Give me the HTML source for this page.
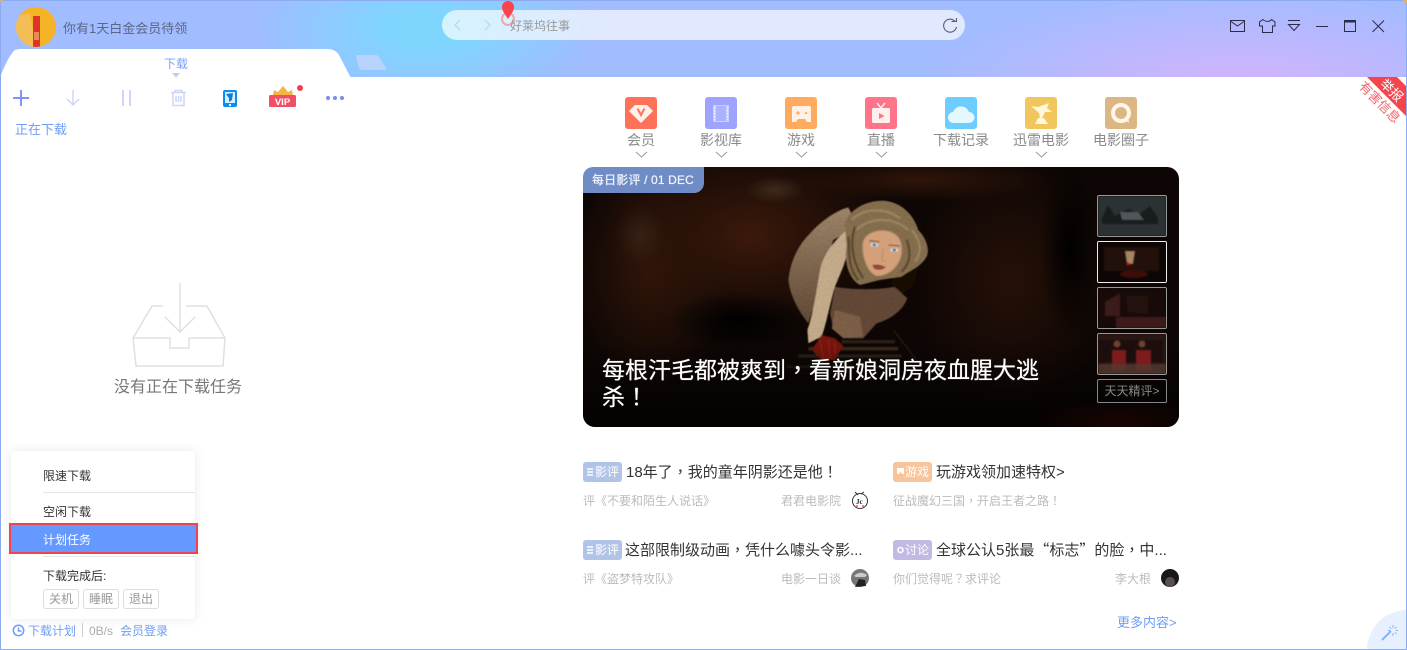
<!DOCTYPE html>
<html><head><meta charset="utf-8"><style>
html,body{margin:0;padding:0;background:#fff;width:1407px;height:650px;overflow:hidden}
#app{position:relative;width:1407px;height:650px;overflow:hidden;background:#fff;font-family:"Liberation Sans","Noto Sans CJK SC",sans-serif;font-size:12px}
.t{position:absolute;white-space:nowrap;line-height:18px;transform:translateY(-8px)}
.abs{position:absolute}
.p{font-family:"Noto Sans CJK TC",sans-serif;line-height:0}
.q{font-family:"Noto Sans CJK SC",sans-serif;line-height:0}
#title{position:absolute;left:0;top:0;width:1407px;height:77px;background:radial-gradient(ellipse 330px 110px at 1240px 95px,#d7b3ff 0%,rgba(215,179,255,0) 100%),radial-gradient(ellipse 175px 80px at 425px 30px,#7ed6ff 0%,#7ed6ff 20%,rgba(126,214,255,0) 100%),#a1bcff}
.ic{position:absolute;width:32px;height:32px;top:97px;border-radius:3px}
.nl{position:absolute;top:139px;color:#8a8a8a;font-size:14px;line-height:18px;transform:translate(-50%,-8px);white-space:nowrap}
.tag{position:absolute;width:39px;height:20px;border-radius:3px;color:#fff;font-size:12px;line-height:20px;text-indent:12px;overflow:hidden}
.ttl{font-size:15px;color:#333}
.sub{color:#bbb;font-size:12px}
.m{color:#333;font-size:12px}
.btn{position:absolute;top:589px;width:34px;height:18px;border:1px solid #ddd;border-radius:3px;color:#999;text-align:center;line-height:19px;font-size:12px}
.th{position:absolute;left:1097px;width:68px;height:40px;border:1px solid #999;border-radius:2px;overflow:hidden}
.th svg{filter:blur(.7px);display:block}
</style></head><body><div id="app">
<div id="title"></div>

<!-- avatar -->
<svg class="abs" style="left:16px;top:7px" width="40" height="40" viewBox="0 0 40 40"><defs><clipPath id="av"><circle cx="20" cy="20" r="20"/></clipPath></defs><g clip-path="url(#av)"><rect width="40" height="40" fill="#f4b426"/><path d="M0 10L14 6 L20 40H0Z" fill="#f5bd55"/><rect x="17" y="9" width="7" height="31" fill="#de3326"/><rect x="18" y="25" width="5" height="8" fill="#e98a55"/></g></svg>
<div class="t" style="left:63px;top:28px;font-size:13px;color:#5b6687">你有1天白金会员待领</div>

<!-- tabs -->
<svg class="abs" style="left:0;top:45px" width="400" height="34" viewBox="0 0 400 34"><path d="M0 34 L0 32 C5 20 10 9 15 5 Q17 4 22 4 L328 4 Q335 4 339 10 L351 33 L351 34Z" fill="#fff"/><path d="M356 11.500 Q355 10 358 10 L376 10 Q378 10 379 12 L386 23 Q387 25 384 25 L362 25 Q360 25 359 23Z" fill="#b9d3ff"/></svg>
<div class="t" style="left:164px;top:63px;font-size:12px;color:#7d9dfb">下载</div>
<svg class="abs" style="left:172px;top:73px" width="8" height="5"><path d="M0 0H8L4 4.500Z" fill="#bcc9fb"/></svg>

<!-- toolbar -->
<svg class="abs" style="left:0;top:80px" width="360" height="36" viewBox="0 80 360 36" fill="none">
<path d="M21 90V106M13 98H29" stroke="#8093ff" stroke-width="2"/>
<path d="M73 90V105M67 99L73 105L79 99" stroke="#cdd5fc" stroke-width="1.500"/>
<path d="M123 90V106M130 90V106" stroke="#cdd5fc" stroke-width="2"/>
<path d="M171 92.500H186M175 92V90.500H182V92M173 93V105.500H184V93M176 96V102M178.500 96V102M181 96V102" stroke="#cdd5fc" stroke-width="1.500"/>
<rect x="223" y="90" width="14" height="17" rx="2" fill="#0b8ef0"/><rect x="225" y="92" width="10" height="11" fill="#d5effc"/><path d="M226 94L233 93L232 100L229 102L229 98Z" fill="#0b7fd8"/><rect x="229" y="104" width="2" height="2" fill="#fff"/>
<path d="M273 95L274 90L278 92L283 86L288 92L292 90L293 95Z" fill="#f7b343"/>
<rect x="269" y="95" width="27" height="12" rx="1.500" fill="#f14f66"/>
<text x="282.500" y="105" text-anchor="middle" font-family="Liberation Sans" font-weight="bold" font-size="9.500" fill="#fff">VIP</text>
<circle cx="300" cy="88" r="3" fill="#f2404a"/>
<circle cx="328" cy="98" r="2" fill="#7b8bef"/><circle cx="335" cy="98" r="2" fill="#7b8bef"/><circle cx="342" cy="98" r="2" fill="#7b8bef"/>
</svg>
<div class="t" style="left:15px;top:129px;font-size:13px;color:#6f9df7">正在下载</div>

<!-- search -->
<div class="abs" style="left:442px;top:10px;width:523px;height:30px;border-radius:15px;background:rgba(255,255,255,.68)"></div>
<svg class="abs" style="left:440px;top:0" width="530" height="44" viewBox="440 0 530 44" fill="none">
<path d="M460 20L455 25L460 30" stroke="#bfd0dc"/><path d="M485 20L490 25L485 30" stroke="#bfd0dc"/>
<circle cx="508" cy="19" r="6" stroke="#f2a5a9" stroke-width="2"/>
<path d="M508 19 C505 14 502 11 502 7 A6 6 0 0 1 514 7 C514 11 511 14 508 19Z" fill="#f8444b"/>
<path d="M955.500 22A6.500 6.500 0 1 0 956.500 27" stroke="#555f7a" stroke-width="1.100"/><path d="M951.500 21.500H956.500V18" stroke="#555f7a" stroke-width="1.100"/>
</svg>
<div class="t" style="left:510px;top:24.500px;font-size:12px;color:#999">好莱坞往事</div>

<!-- window controls -->
<svg class="abs" style="left:1225px;top:14px" width="165" height="24" viewBox="1225 14 165 24" fill="none" stroke="#2c2c4a" stroke-width="1">
<rect x="1230.500" y="20.500" width="14" height="11"/><path d="M1231 21.500L1237.500 26L1244 21.500"/>
<path d="M1263 19.500L1259.500 22V26H1262.500V32.500H1272.500V26H1275V22L1271.500 19.500C1270 22 1265 22 1263 19.500Z"/>
<path d="M1288 20.500H1300M1288.500 24.500H1299.500L1294 30.500Z"/>
<path d="M1316 26.500H1328"/>
<rect x="1344.500" y="20.500" width="11" height="11"/><path d="M1344 21.500H1356" stroke-width="2"/>
<path d="M1372.500 20.500L1384 32M1384 20.500L1372.500 32"/>
</svg>

<!-- ribbon -->
<svg class="abs" style="left:1340px;top:77px" width="67" height="60" viewBox="1340 77 67 60"><path d="M1367 77H1397L1407 87V117Z" fill="#f4454c"/>
<text x="1392" y="95" text-anchor="middle" transform="rotate(45 1392 90)" font-size="13" fill="#fff" font-family="Noto Sans CJK SC">举报</text>
<text x="1380" y="107" text-anchor="middle" transform="rotate(45 1380 102)" font-size="13" fill="#f4666c" font-family="Noto Sans CJK SC">有害信息</text></svg>

<!-- nav icons -->
<div class="ic" style="left:625px;background:#fe7259"></div>
<svg class="abs" style="left:625px;top:97px" width="32" height="32" viewBox="0 0 32 32"><path d="M10 8H22L28 14L16 26L4 14Z" fill="#fff0ea"/><path d="M12.500 11.500L16 18L19.500 11.500" stroke="#fe7259" stroke-width="2" fill="none"/></svg>
<div class="ic" style="left:705px;background:#9da3ff"></div>
<svg class="abs" style="left:705px;top:97px" width="32" height="32" viewBox="0 0 32 32"><rect x="8" y="8" width="16" height="17" fill="#c9cdff"/><rect x="11" y="9" width="10" height="15" fill="#adb2ff"/><path d="M9.500 10V23M22.500 10V23" stroke="#eef" stroke-width="1.500" stroke-dasharray="1.500 1.500"/></svg>
<div class="ic" style="left:785px;background:#ffab5f"></div>
<svg class="abs" style="left:785px;top:97px" width="32" height="32" viewBox="0 0 32 32"><path d="M9 9H24Q26 9 26 11V25H22L20 22H13L11 25H7V11Q7 9 9 9Z" fill="#fff1e3"/><path d="M11 16H15M13 14V18" stroke="#ffab5f" stroke-width="1.300"/><circle cx="21" cy="16" r="1.200" fill="#ffab5f"/></svg>
<div class="ic" style="left:865px;background:#ff7488"></div>
<svg class="abs" style="left:865px;top:97px" width="32" height="32" viewBox="0 0 32 32"><rect x="7" y="11" width="18" height="15" rx="1.500" fill="#fff0ee"/><path d="M12 6L16 11L20 6" stroke="#fff0ee" stroke-width="1.500" fill="none"/><path d="M14 16L19.500 19L14 22Z" fill="#ff7488"/></svg>
<div class="ic" style="left:945px;background:#6dcdff"></div>
<svg class="abs" style="left:945px;top:97px" width="32" height="32" viewBox="0 0 32 32"><path d="M9 26A5.500 5.500 0 0 1 8 15A8.500 8.500 0 0 1 24 15A5.500 5.500 0 0 1 24 26Z" fill="#e4f8ff"/></svg>
<div class="ic" style="left:1025px;background:#f0c65d"></div>
<svg class="abs" style="left:1025px;top:97px" width="32" height="32" viewBox="0 0 32 32"><path d="M6 9L13 10L24 6L22 11L27 15L20 15L17 21H15L14 16Z" fill="#fff6dc"/><path d="M10 27L13 21H19L23 27Z" fill="#fff6dc"/></svg>
<div class="ic" style="left:1105px;background:#dcb784"></div>
<svg class="abs" style="left:1105px;top:97px" width="32" height="32" viewBox="0 0 32 32"><circle cx="16" cy="16" r="8" fill="none" stroke="#fff7e8" stroke-width="4"/><path d="M19 22L24 26L23 20Z" fill="#fff7e8"/></svg>
<div class="nl" style="left:641px">会员</div><div class="nl" style="left:721px">影视库</div><div class="nl" style="left:801px">游戏</div><div class="nl" style="left:881px">直播</div><div class="nl" style="left:961px">下载记录</div><div class="nl" style="left:1041px">迅雷电影</div><div class="nl" style="left:1121px">电影圈子</div>
<svg class="abs" style="left:630px;top:150px" width="420" height="10" fill="none" stroke="#999"><path d="M6 2L11.500 7L17 2M86 2L91.500 7L97 2M166 2L171.500 7L177 2M246 2L251.500 7L257 2M406 2L411.500 7L417 2"/></svg>

<!-- hero -->
<svg class="abs" style="left:583px;top:167px;border-radius:12px" width="596" height="260" viewBox="583 167 596 260">
<defs>
<radialGradient id="g1"><stop offset="0" stop-color="#3b190b"/><stop offset="1" stop-color="#3b190b" stop-opacity="0"/></radialGradient>
<radialGradient id="g2"><stop offset="0" stop-color="#301509"/><stop offset="1" stop-color="#301509" stop-opacity="0"/></radialGradient>
<radialGradient id="g3"><stop offset="0" stop-color="#000"/><stop offset="1" stop-color="#000" stop-opacity="0"/></radialGradient>
<radialGradient id="g4"><stop offset="0" stop-color="#4a0f0a"/><stop offset="1" stop-color="#4a0f0a" stop-opacity="0"/></radialGradient>
<radialGradient id="g5"><stop offset="0" stop-color="#3f2a1d"/><stop offset="1" stop-color="#3f2a1d" stop-opacity="0"/></radialGradient>
<linearGradient id="fd" x1="0" y1="0" x2="0" y2="1"><stop offset="0" stop-color="#000" stop-opacity="0"/><stop offset="1" stop-color="#000" stop-opacity=".7"/></linearGradient>
<linearGradient id="dr" x1="0" y1="0" x2="0" y2="1"><stop offset="0" stop-color="#9f8669"/><stop offset="1" stop-color="#614a37"/></linearGradient>
<filter id="tex" x="0" y="0" width="100%" height="100%"><feGaussianBlur in="SourceGraphic" stdDeviation=".9" result="s"/><feTurbulence type="fractalNoise" baseFrequency=".45" numOctaves="2" seed="4"/><feColorMatrix type="saturate" values="0" result="n"/><feComposite in="s" in2="n" operator="arithmetic" k1="2.200" k2=".4" k3="0" k4="0" result="m"/><feComposite in="m" in2="s" operator="in"/></filter>
<filter id="sf" x="-10%" y="-10%" width="120%" height="120%"><feGaussianBlur stdDeviation="1.200"/></filter>
<filter id="all" x="-5%" y="-5%" width="110%" height="110%"><feGaussianBlur stdDeviation=".45"/></filter>
</defs>
<rect x="583" y="167" width="596" height="260" fill="#0d0604"/>
<ellipse cx="750" cy="235" rx="150" ry="100" fill="url(#g1)"/>
<ellipse cx="650" cy="270" rx="80" ry="120" fill="url(#g2)"/>
<ellipse cx="1010" cy="280" rx="100" ry="130" fill="url(#g2)" opacity=".7"/>
<ellipse cx="920" cy="180" rx="130" ry="22" fill="url(#g2)"/>
<ellipse cx="640" cy="235" rx="24" ry="30" fill="url(#g5)" opacity=".6"/>
<ellipse cx="775" cy="190" rx="30" ry="14" fill="url(#g5)"/>
<ellipse cx="740" cy="320" rx="70" ry="30" fill="url(#g3)"/>
<ellipse cx="1070" cy="250" rx="30" ry="90" fill="url(#g3)"/>
<ellipse cx="1120" cy="425" rx="90" ry="24" fill="url(#g4)"/>
<g filter="url(#all)"><g transform="translate(780 190) scale(.3333)">
<g stroke-width="10" fill="none" filter="url(#sf)">
<path d="M185 455H345" stroke="#2c2019"/><path d="M85 476H355" stroke="#3a2b22"/><path d="M55 498H365" stroke="#2c2019"/><path d="M20 530H350" stroke="#1f140f"/>
<path d="M340 420L410 510" stroke="#20130b" stroke-width="6"/>
</g>
<g filter="url(#tex)">
<path d="M25 270C30 220 50 170 90 130C120 95 170 60 205 52L235 110L160 150L125 260L105 340L85 400C60 370 30 320 25 270Z" fill="url(#dr)"/>
<path d="M165 290C210 300 300 300 345 290L382 325C370 360 330 390 290 400L250 445L200 445L160 420L150 370Z" fill="#654a38"/>
<path d="M165 360L240 380L250 440L190 445L155 415Z" fill="#7f604a"/>
<path d="M200 120C165 150 130 190 120 240C110 300 100 370 82 420L85 460L125 440C140 400 150 340 165 290L190 230L215 150Z" fill="#c6ad8c"/>
</g>
<path d="M350 250L420 220L400 290L370 310L330 280Z" fill="#120906" filter="url(#sf)"/>
<g filter="url(#tex)">
<path d="M195 100C205 60 260 30 310 32C360 35 400 70 415 120C440 145 450 180 440 200C425 230 390 240 365 260L300 270L240 285C210 270 190 220 200 170Z" fill="#86704f"/>
</g>
<g fill="none" stroke-width="5" filter="url(#sf)">
<path d="M215 90C250 55 310 50 360 85M230 120C270 80 340 80 385 120M395 120C420 150 430 180 405 215" stroke="#a48c68"/>
<path d="M205 140C210 180 200 230 235 270M225 110C205 170 225 230 250 265M380 150C395 190 390 220 365 245" stroke="#4e3824"/>
</g>
<path d="M248 160C255 125 300 115 330 125C355 135 368 150 365 190C360 225 330 258 290 258C265 250 245 205 248 160Z" fill="#d3a07a" filter="url(#sf)"/>
<path d="M268 152L298 155M325 165L360 168" stroke="#8a6442" stroke-width="4" fill="none"/>
<ellipse cx="283" cy="165" rx="12" ry="6" fill="#cfdadf"/><circle cx="283" cy="165" r="5" fill="#5b7f92"/>
<ellipse cx="343" cy="180" rx="12" ry="6" fill="#cfdadf"/><circle cx="343" cy="180" r="5" fill="#5b7f92"/>
<path d="M310 175L305 210L318 214" stroke="#bd8862" stroke-width="3" fill="none"/>
<path d="M277 225Q297 220 318 232Q298 245 282 236Z" fill="#94483c"/>
<path d="M95 480L125 435L165 445L192 470L175 490L165 510L125 510Z" fill="#781310" filter="url(#sf)"/>
<path d="M120 450L130 505M145 448L150 505M165 460L165 490" stroke="#96241d" stroke-width="3" fill="none"/>
</g></g>
<rect x="583" y="340" width="596" height="87" fill="url(#fd)"/>
</svg>
<div class="abs" style="left:583px;top:167px;width:121px;height:26px;background:#6f8cc6;border-radius:10px 0 10px 0;color:#f1f4fb;font-size:12px;line-height:26px;text-indent:9px;white-space:nowrap;letter-spacing:.15px;text-shadow:0 0 .6px #fff">每日影评 / 01 DEC</div>
<div class="abs" style="left:602px;top:357px;width:445px;color:#fff;font-size:23px;line-height:27px;text-shadow:0 0 .6px #fff">每根汗毛都被爽到<span class="p">，</span>看新娘洞房夜血腥大逃杀<span class="p">！</span></div>

<div class="th" style="top:195px"><svg width="68" height="40"><rect width="68" height="40" fill="#2c3233"/><path d="M4 22L10 9L17 20L30 13L42 18L52 10L60 22L60 28H4Z" fill="#171c1d"/><path d="M22 16L40 16L46 24L24 24Z" fill="#50575a"/></svg></div>
<div class="th" style="top:241px;border-color:#eee"><svg width="68" height="40"><rect width="68" height="40" fill="#0d0604"/><rect x="6" y="5" width="55" height="24" fill="#22100a"/><path d="M27 9H37L35 22H29Z" fill="#a58564"/><circle cx="30" cy="22" r="1.500" fill="#c11"/><ellipse cx="36" cy="32" rx="14" ry="4" fill="#3e0d08"/></svg></div>
<div class="th" style="top:287px"><svg width="68" height="40"><rect width="68" height="40" fill="#170a09"/><path d="M7 14L22 5L22 28L7 28Z" fill="#3c1b1a"/><path d="M28 8L50 8L50 26L30 24Z" fill="#24120f"/><rect x="18" y="29" width="50" height="11" fill="#3d1b18"/></svg></div>
<div class="th" style="top:333px"><svg width="68" height="40"><rect width="68" height="40" fill="#2a1612"/><rect x="1" y="6" width="64" height="22" fill="#1c0e0c"/><rect x="14" y="16" width="14" height="20" fill="#7c1c1d"/><circle cx="19" cy="10" r="3.500" fill="#6e4130"/><rect x="38" y="16" width="15" height="20" fill="#7c1c1d"/><circle cx="44" cy="10" r="3.500" fill="#6e4130"/><rect x="0" y="30" width="68" height="10" fill="#54392f" opacity=".8"/></svg></div>
<div class="abs" style="left:1097px;top:379px;width:68px;height:22px;border:1px solid #888;border-radius:2px;color:#888;font-size:12px;line-height:23px;text-align:center;white-space:nowrap">天天精评&gt;</div>

<!-- articles -->
<div class="tag" style="left:583px;top:462px;background:#b0c4e8">影评</div>
<svg class="abs" style="left:587px;top:468px" width="6" height="8"><path d="M0 1H6M0 4H6M0 7H6" stroke="#fff" stroke-width="1.400"/></svg>
<div class="t ttl" style="left:626px;top:472px">18年了<span class="p">，</span>我的童年阴影还是他<span class="p">！</span></div>
<div class="t sub" style="left:583px;top:500px">评《不要和陌生人说话》</div>
<div class="t sub" style="left:781px;top:500px">君君电影院</div>
<svg class="abs" style="left:851px;top:491px" width="18" height="18"><circle cx="9" cy="10" r="7.500" fill="#fff" stroke="#333"/><path d="M4 1L7 4M10 3L13 1" stroke="#333"/><text x="5" y="13" font-size="7" font-family="Liberation Serif" font-weight="bold" fill="#222">Jc</text><circle cx="6" cy="15" r="1" fill="#e56"/><circle cx="12" cy="15" r="1" fill="#e56"/></svg>

<div class="tag" style="left:893px;top:462px;background:#f9c49a">游戏</div>
<svg class="abs" style="left:897px;top:468px" width="7" height="8"><path d="M0 0H7V6H5L4.500 4.500H2.500L2 6H0Z" fill="#fff"/></svg>
<div class="t ttl" style="left:936px;top:472px">玩游戏领加速特权&gt;</div>
<div class="t sub" style="left:893px;top:500px">征战魔幻三国<span class="p">，</span>开启王者之路<span class="p">！</span></div>

<div class="tag" style="left:583px;top:540px;background:#b0c4e8">影评</div>
<svg class="abs" style="left:587px;top:546px" width="6" height="8"><path d="M0 1H6M0 4H6M0 7H6" stroke="#fff" stroke-width="1.400"/></svg>
<div class="t ttl" style="left:625px;top:550px">这部限制级动画<span class="p">，</span>凭什么噱头令影...</div>
<div class="t sub" style="left:583px;top:578px">评《盗梦特攻队》</div>
<div class="t sub" style="left:781px;top:578px">电影一日谈</div>
<svg class="abs" style="left:851px;top:569px" width="18" height="18"><circle cx="9" cy="9" r="9" fill="#777"/><path d="M3 7Q9 1 16 6L14 8H5Z" fill="#ccc"/><path d="M4 18L8 10L14 11L15 17Z" fill="#222"/></svg>

<div class="tag" style="left:893px;top:540px;background:#c3b9e3">讨论</div>
<svg class="abs" style="left:897px;top:546px" width="7" height="8"><circle cx="3.500" cy="4" r="2.500" fill="none" stroke="#fff" stroke-width="1.600"/></svg>
<div class="t ttl" style="left:936px;top:550px">全球公认5张最<span class="q">“</span>标志<span class="q">”</span>的脸<span class="p">，</span>中...</div>
<div class="t sub" style="left:893px;top:578px">你们觉得呢<span class="p">？</span>求评论</div>
<div class="t sub" style="left:1115px;top:578px">李大根</div>
<svg class="abs" style="left:1161px;top:569px" width="18" height="18"><circle cx="9" cy="9" r="9" fill="#1b1719"/><ellipse cx="9" cy="13" rx="5" ry="5" fill="#55504f"/></svg>
<div class="t" style="left:1117px;top:622px;font-size:13px;color:#6f9df7">更多内容&gt;</div>

<!-- empty -->
<svg class="abs" style="left:125px;top:276px" width="110" height="96" viewBox="125 276 110 96" fill="none" stroke="#e0e0e0" stroke-width="1.500">
<path d="M180 283V331M165 317L180 332L195 317"/>
<path d="M163 306H152L133 338L136 366H223L225 338L207 306H186"/>
<path d="M133 338H170V348H189V338H225"/>
</svg>
<div class="t" style="left:114px;top:387px;font-size:16px;color:#777">没有正在下载任务</div>

<!-- menu -->
<div class="abs" style="left:11px;top:451px;width:184px;height:168px;background:#fff;border-radius:4px;box-shadow:0 0 12px rgba(0,0,0,.09)"></div>
<div class="t m" style="left:43px;top:475px">限速下载</div>
<div class="abs" style="left:43px;top:492px;width:152px;height:1px;background:#e6e6e6"></div>
<div class="t m" style="left:43px;top:511px">空闲下载</div>
<div class="abs" style="left:9px;top:523px;width:185px;height:27px;background:#6699ff;border:2px solid #f0444c"></div>
<div class="t m" style="left:43px;top:539px;color:#fff">计划任务</div>
<div class="abs" style="left:43px;top:556px;width:152px;height:1px;background:#e6e6e6"></div>
<div class="t m" style="left:43px;top:575px">下载完成后:</div>
<div class="btn" style="left:43px">关机</div><div class="btn" style="left:83px">睡眠</div><div class="btn" style="left:123px">退出</div>

<!-- footer -->
<svg class="abs" style="left:12px;top:624px" width="13" height="13" fill="none" stroke="#6f9df7" stroke-width="1.500"><circle cx="6.500" cy="6.500" r="5.200"/><path d="M6.500 3.500V7H9.500"/></svg>
<div class="t" style="left:28px;top:630px;color:#6f9df7">下载计划</div>
<div class="abs" style="left:82px;top:623px;width:1px;height:14px;background:#ccc"></div>
<div class="t" style="left:89px;top:630px;color:#aaa">0B/s</div>
<div class="t" style="left:120px;top:630px;color:#6f9df7">会员登录</div>

<!-- magic -->
<svg class="abs" style="left:1360px;top:603px" width="47" height="47" viewBox="1360 603 47 47"><path d="M1367 650A40 40 0 0 1 1407 610V650Z" fill="#e7f0ff"/><g fill="none" stroke="#8ab0f5"><path d="M1382 640L1391 631" stroke-width="2"/><path d="M1393 625V628M1393 633V636M1388 630.500H1390.500M1395.500 630.500H1398M1389.500 627L1391 628.500M1395 632.500L1396.500 634M1395 628.500L1396.500 627"/></g></svg>

<!-- border -->
<div class="abs" style="left:0;top:0;width:1405px;height:648px;border:1px solid #8dabf0;pointer-events:none"></div>
<div class="abs" style="left:1403px;top:0;width:4px;height:3px;background:#d8b27a"></div>
<div class="abs" style="left:0;top:0;width:3px;height:2px;background:#d8b27a"></div>
</div></body></html>
